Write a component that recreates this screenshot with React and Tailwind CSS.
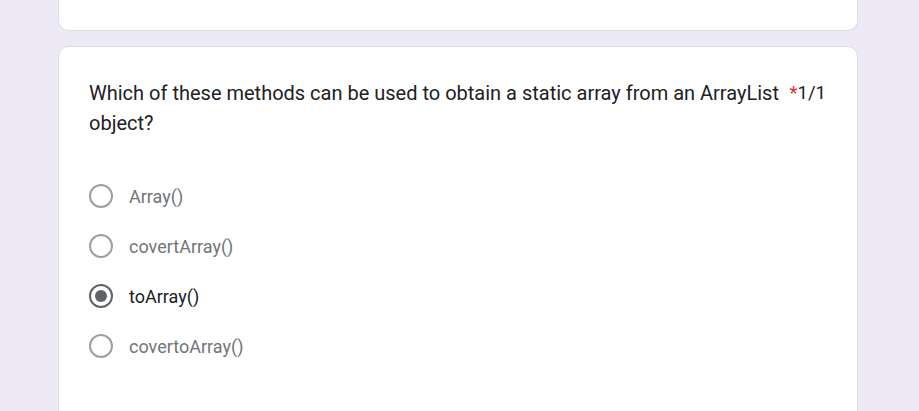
import React from "react";

const options = [
  { label: "Array()", checked: false },
  { label: "covertArray()", checked: false },
  { label: "toArray()", checked: true },
  { label: "covertoArray()", checked: false },
];

const Radio = ({ checked }) => (
  <div
    className={`w-[24px] h-[24px] rounded-full border-2 flex items-center justify-center shrink-0 ${
      checked ? "border-[#5f6368]" : "border-[#9aa0a6]"
    }`}
  >
    {checked && <div className="w-[12px] h-[12px] rounded-full bg-[#5f6368]" />}
  </div>
);

export default function App() {
  return (
    <div className="min-h-[411px] bg-[#ede9f7] pl-[58px] pr-[61px] font-['Roboto',sans-serif]">
      <div className="h-[31px] bg-white border-x border-b border-[#dadce0] rounded-b-[10px]" />
      <div className="mt-[15px] h-[380px] bg-white border border-[#dadce0] rounded-[10px] pt-[31px] pl-[30px] pr-[31px]">
        <div className="flex items-start justify-between">
          <div className="text-[20px] leading-[30px] text-[#202124] w-[696px]">
            Which of these methods can be used to obtain a static array from an ArrayList object?
          </div>
          <div className="text-[18.5px] leading-[30px] text-[#202124] whitespace-nowrap">
            <span className="text-[#d93025]">*</span>1/1
          </div>
        </div>
        <div className="mt-[46px] flex flex-col gap-[26px]">
          {options.map((o) => (
            <div key={o.label} className="flex items-center gap-[16px] h-[24px]">
              <Radio checked={o.checked} />
              <span
                className={`text-[18px] ${o.checked ? "text-[#202124]" : "text-[#70757a]"}`}
              >
                {o.label}
              </span>
            </div>
          ))}
        </div>
      </div>
    </div>
  );
}
